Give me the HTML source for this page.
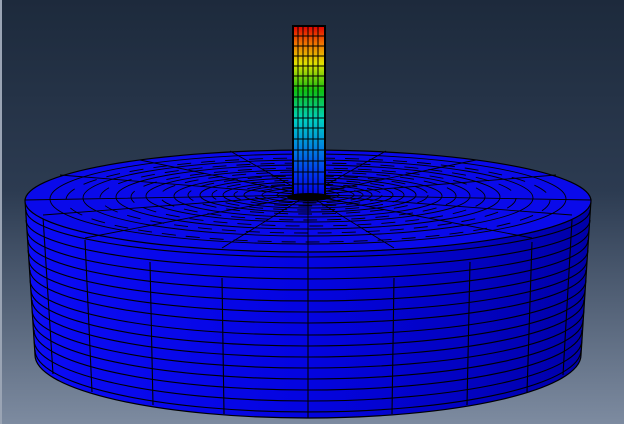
<!DOCTYPE html>
<html><head><style>html,body{margin:0;padding:0;width:624px;height:424px;overflow:hidden}</style></head>
<body>
<svg width="624" height="424" viewBox="0 0 624 424" xmlns="http://www.w3.org/2000/svg">
<defs>
<linearGradient id="bg" x1="0" y1="0" x2="0" y2="1">
<stop offset="0" stop-color="#1d2a3c"/><stop offset="0.45" stop-color="#2c3b51"/><stop offset="1" stop-color="#7d8ba0"/>
</linearGradient>
<linearGradient id="side" x1="0" y1="0" x2="1" y2="0">
<stop offset="0" stop-color="#0c0cf6"/><stop offset="0.5" stop-color="#0404e0"/><stop offset="1" stop-color="#0000a8"/>
</linearGradient>
<linearGradient id="pil" x1="0" y1="0" x2="0" y2="1">
<stop offset="0" stop-color="#e00000"/><stop offset="0.1" stop-color="#f07000"/><stop offset="0.22" stop-color="#e0e000"/><stop offset="0.38" stop-color="#10c010"/><stop offset="0.55" stop-color="#00d0c0"/><stop offset="0.72" stop-color="#0080e0"/><stop offset="0.88" stop-color="#0030f0"/><stop offset="1" stop-color="#0000e0"/>
</linearGradient>
</defs>
<rect width="624" height="424" fill="url(#bg)"/>
<rect x="0" y="0" width="2" height="424" fill="#9aa4b4"/>
<path d="M25,200 L35,355 A273,63 0 0 0 581,355 L591,200 Z" fill="url(#side)" stroke="#000" stroke-width="1.2"/>
<g fill="none" stroke="#000" stroke-width="1.1">
<path d="M26,210 A282,47 0 0 0 590,210"/>
<path d="M26,220 A282,48 0 0 0 590,220"/>
<path d="M27,230 A281,49 0 0 0 589,230"/>
<path d="M28,240 A280,50 0 0 0 588,240"/>
<path d="M28,250 A280,51 0 0 0 588,250"/>
<path d="M29,260 A279,52 0 0 0 587,260"/>
<path d="M30,270 A278,53 0 0 0 586,270"/>
<path d="M30,280 A278,55 0 0 0 586,280"/>
<path d="M31,290 A277,56 0 0 0 585,290"/>
<path d="M32,300 A276,57 0 0 0 584,300"/>
<path d="M32,310 A276,58 0 0 0 584,310"/>
<path d="M33,320 A275,59 0 0 0 583,320"/>
<path d="M34,330 A274,60 0 0 0 582,330"/>
<path d="M34,340 A274,61 0 0 0 582,340"/>
<path d="M35,350 A273,62 0 0 0 581,350"/>
<path d="M43,217 L53,374"/>
<path d="M85,240 L92,392"/>
<path d="M150,262 L153,405"/>
<path d="M222,278 L224,414"/>
<path d="M308,253 L308,418"/>
<path d="M394,278 L392,414"/>
<path d="M470,262 L467,405"/>
<path d="M532,242 L527,392"/>
<path d="M572,220 L563,375"/>
</g>
<ellipse cx="308" cy="201" rx="283" ry="51" fill="#0a0aea" stroke="#000" stroke-width="1.2"/>
<g fill="none" stroke="#000" stroke-width="0.9">
<ellipse cx="308" cy="199" rx="258" ry="45"/>
<ellipse cx="308" cy="198" rx="225" ry="38"/>
<ellipse cx="308" cy="197" rx="192" ry="32"/>
<ellipse cx="308" cy="196" rx="162" ry="26"/>
<ellipse cx="308" cy="196" rx="134" ry="21"/>
<ellipse cx="308" cy="195" rx="108" ry="17"/>
<ellipse cx="308" cy="195" rx="85" ry="13"/>
<ellipse cx="308" cy="195" rx="64" ry="10"/>
<ellipse cx="308" cy="195" rx="46" ry="7"/>
<ellipse cx="308" cy="195" rx="31" ry="5"/>
<path d="M308,195 L308,252 M308,195 L222,248 M308,195 L394,248 M308,195 L85,238 M308,195 L532,238 M308,195 L43,215 M308,195 L572,215 M308,195 L25,200 M308,195 L591,200 M308,195 L60,175 M308,195 L556,175 M308,195 L140,160 M308,195 L476,160 M308,195 L230,151 M308,195 L386,151 M308,195 L308,150"/>
</g>
<g fill="none" stroke="#000" stroke-width="0.9" stroke-dasharray="14 10">
<ellipse cx="308" cy="200" rx="242" ry="42"/>
<ellipse cx="308" cy="198" rx="208" ry="35"/>
<ellipse cx="308" cy="197" rx="177" ry="29"/>
<ellipse cx="308" cy="196" rx="148" ry="24"/>
<ellipse cx="308" cy="195" rx="120" ry="19"/>
<ellipse cx="308" cy="195" rx="96" ry="15"/>
<ellipse cx="308" cy="195" rx="74" ry="11"/>
<ellipse cx="308" cy="195" rx="55" ry="8"/>
</g>
<rect x="293" y="26" width="32" height="170" fill="url(#pil)" stroke="#000" stroke-width="2"/>
<g stroke="#000" stroke-width="1">
<path d="M298,27V196 M303,27V196 M308,27V196 M313,27V196 M318,27V196"/>
<path d="M293,36H325 M293,46H325 M293,56H325 M293,66H325 M293,76H325 M293,86H325 M293,97H325 M293,107H325 M293,118H325 M293,128H325 M293,139H325 M293,150H325 M293,161H325 M293,172H325 M293,184H325"/>
</g>
<ellipse cx="309" cy="197" rx="22" ry="4" fill="#000"/>
</svg>
</body></html>
